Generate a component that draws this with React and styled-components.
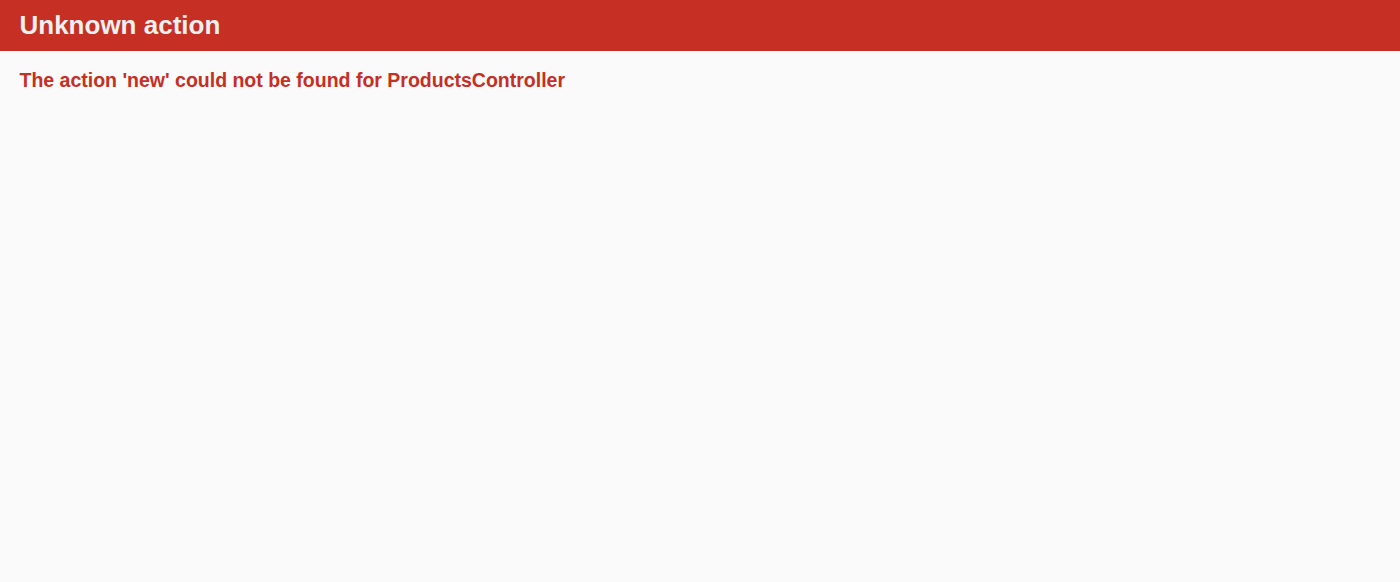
import React from 'react';
import styled, { createGlobalStyle } from 'styled-components';

const GlobalStyle = createGlobalStyle`
  html, body {
    margin: 0;
    background-color: #FAFAFA;
    color: #333;
  }
  body {
    font-family: "Liberation Sans", Helvetica, Arial, sans-serif;
    font-size: 13px;
    line-height: 18px;
  }
`;

const Page = styled.div`
  min-height: 582px;
  background-color: #FAFAFA;
`;

const Header = styled.header`
  color: #F0F0F0;
  background: #C52F24;
  padding: 6px 1.5em;
`;

const Title = styled.h1`
  margin: 0.2em 0;
  line-height: 1.1em;
  font-size: 2em;
  font-weight: bold;
`;

const Container = styled.div`
  box-sizing: border-box;
  width: 100%;
  padding: 0 1.5em;
`;

const Message = styled.h2`
  color: #C52F24;
  line-height: 25px;
  font-size: 1.5em;
  margin: 17px 0 16px;
`;

export default function App() {
  return (
    <Page>
      <GlobalStyle />
      <Header>
        <Title>Unknown action</Title>
      </Header>
      <Container>
        <Message>The action 'new' could not be found for ProductsController</Message>
      </Container>
    </Page>
  );
}
